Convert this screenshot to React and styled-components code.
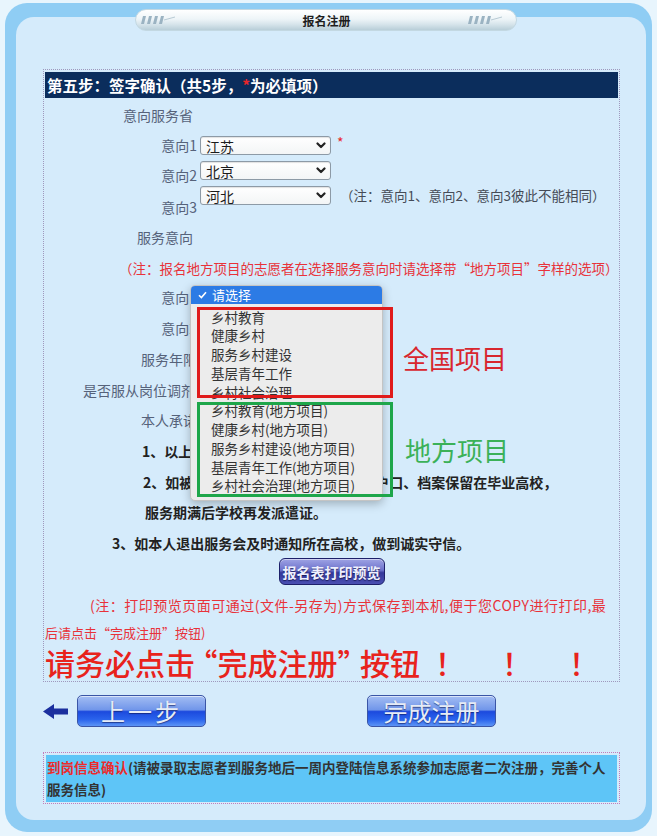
import React from "react";
import styled, { createGlobalStyle } from "styled-components";

const GlobalStyle = createGlobalStyle`
  html, body { margin: 0; padding: 0; }
  body {
    background: #e8f5fd;
    font-family: "Noto Sans CJK SC", "Noto Sans", sans-serif;
    text-spacing-trim: space-all;
  }
  #root { width: 657px; height: 836px; overflow: hidden; }
`;

const Frame = styled.div`
  box-sizing: border-box;
  width: 647px;
  height: 829px;
  margin: 3px 0 0 5px;
  background: #8fcdf4;
  border-radius: 22px;
  padding: 14px 6px 12px 11px;
`;

const Panel = styled.div`
  height: 803px;
  background: #d5ebfb;
  border-radius: 18px;
  display: flex;
  flex-direction: column;
`;

const Tab = styled.div`
  box-sizing: border-box;
  margin: -8px 0 0 119px;
  width: 382px;
  height: 22px;
  border-radius: 11px;
  border: 1px solid #c3d8e2;
  background: linear-gradient(#ffffff 0%, #eef5f8 45%, #d3e2e9 75%, #b8ced8 100%);
  display: flex;
  align-items: center;
  justify-content: space-between;
  padding: 0 12px 0 5px;
`;

const TabTitle = styled.span`
  font-size: 12px;
  font-weight: 700;
  color: #1e1e1e;
  margin-left: 8px;
`;

const Deco = () => (
  <svg width="36" height="10" viewBox="0 0 36 10">
    {[0, 6, 12, 18].map((x) => (
      <polygon key={x} points={`${x + 2},1 ${x + 5},1 ${x + 3},9 ${x},9`} fill="#9bb3c2" />
    ))}
    <line x1="23" y1="5" x2="34" y2="2" stroke="#b8cad4" strokeWidth="1" />
  </svg>
);

const FormBox = styled.div`
  box-sizing: border-box;
  margin: 38px 0 0 27px;
  width: 577px;
  height: 613px;
  border: 1px dotted #9f98bd;
  padding: 2px 1px;
`;

const StepBar = styled.div`
  height: 26px;
  background: #0b2d5c;
  color: #fff;
  font-size: 15.5px;
  font-weight: 700;
  line-height: 26px;
  padding-left: 2px;
  white-space: nowrap;
`;

const Star = styled.span`
  color: #e8262a;
`;

const Row = styled.div`
  position: relative;
  display: flex;
  align-items: ${(p) => (p.$top ? "flex-start" : "center")};
  height: ${(p) => p.$h}px;
  margin-top: ${(p) => p.$mt || 0}px;
  padding-left: ${(p) => p.$pl || 0}px;
  justify-content: ${(p) => (p.$center ? "center" : "flex-start")};
  white-space: nowrap;
`;

const Label = styled.div`
  flex-shrink: 0;
  box-sizing: border-box;
  width: 152px;
  text-align: right;
  padding-right: ${(p) => p.$pr || 0}px;
  margin-top: ${(p) => p.$off || 0}px;
  line-height: 19px;
  font-size: 14px;
  color: #56627a;
`;

const SelectBox = styled.div`
  box-sizing: border-box;
  flex-shrink: 0;
  width: 131px;
  height: 19px;
  margin-left: 3px;
  border: 1px solid #8d9aa6;
  border-radius: 3px;
  background: linear-gradient(#ffffff, #f3f5f6);
  box-shadow: inset 0 1px 1px rgba(0, 0, 0, 0.12);
  display: flex;
  align-items: center;
  justify-content: space-between;
  padding: 0 4px 0 5px;
  font-size: 14px;
  color: #1c1c1c;
`;

const Chevron = () => (
  <svg width="10" height="7" viewBox="0 0 10 7">
    <polyline points="1.5,1.5 5,5 8.5,1.5" fill="none" stroke="#222" strokeWidth="2.2" strokeLinecap="round" strokeLinejoin="round" />
  </svg>
);

const Select = ({ value }) => (
  <SelectBox>
    <span>{value}</span>
    <Chevron />
  </SelectBox>
);

const ReqMark = styled.span`
  color: #e8262a;
  font-size: 14px;
  margin: -4px 0 0 6px;
`;

const Hint = styled.span`
  font-size: ${(p) => p.$fs || 13}px;
  letter-spacing: ${(p) => p.$ls || 0}px;
  color: ${(p) => (p.$red ? "#e8323a" : "#454b57")};
  margin-left: ${(p) => p.$ml || 0}px;
  line-height: 19px;
`;

const Pledge = styled.div`
  font-size: 14px;
  font-weight: 700;
  color: #222;
`;

const PrintButton = styled.button`
  box-sizing: border-box;
  width: 106px;
  height: 27px;
  border: 1px solid #1d206a;
  border-radius: 6px;
  background: linear-gradient(#9ea3e4 0%, #6d72cc 45%, #34379a 55%, #4a4fb2 100%);
  color: #eef0ff;
  font-family: inherit;
  font-size: 14px;
  font-weight: 700;
  text-shadow: 0 1px 1px rgba(0, 0, 40, 0.6);
  padding: 0;
  box-shadow: inset 0 1px 0 rgba(255, 255, 255, 0.5);
`;

const BigWarn = styled.div`
  font-size: 30px;
  font-weight: 500;
  color: #e8231c;
  line-height: 32px;
`;

const OpenQuote = styled.span`
  margin-left: -0.25em;
`;

const CloseQuote = styled.span`
  margin-right: -0.25em;
`;

const Bang = styled.span`
  display: inline-block;
  margin-left: ${(p) => p.$ml}px;
`;

const Menu = styled.div`
  position: absolute;
  left: 145px;
  top: 3px;
  width: 193px;
  box-sizing: border-box;
  background: #ececec;
  border: 1px solid #c4c4c4;
  border-radius: 5px;
  box-shadow: 0 3px 10px rgba(0, 0, 0, 0.25);
  padding-bottom: 5px;
  z-index: 5;
  overflow: hidden;
`;

const MenuHead = styled.div`
  height: 18px;
  line-height: 18px;
  background: #2c7be5;
  color: #fff;
  font-size: 13px;
  padding-left: 7px;
  display: flex;
  align-items: center;
  gap: 5px;
`;

const MenuList = styled.div`
  padding-top: 3.5px;
`;

const MenuItem = styled.div`
  line-height: 18.75px;
  height: 18.75px;
  font-size: 13.5px;
  color: #333;
  padding-left: 20px;
`;

const Mark = styled.div`
  position: absolute;
  box-sizing: border-box;
  left: 152px;
  top: ${(p) => p.$top}px;
  width: 196px;
  height: ${(p) => p.$h}px;
  border: 3px solid ${(p) => p.$color};
  z-index: 6;
`;

const MarkText = styled.div`
  position: absolute;
  left: ${(p) => p.$left}px;
  top: ${(p) => p.$top}px;
  font-size: 26px;
  line-height: 32px;
  color: ${(p) => p.$color};
  z-index: 6;
`;

const Nav = styled.div`
  display: flex;
  align-items: center;
  height: 32px;
  margin-top: 13px;
  padding-left: 27px;
`;

const GlossButton = styled.button`
  box-sizing: border-box;
  width: 129px;
  height: 32px;
  margin-left: ${(p) => p.$ml}px;
  border: 1px solid #3a55a6;
  border-radius: 5px;
  background: linear-gradient(#a3bdf3 0%, #7196ea 46%, #1c4ade 52%, #2a63ec 78%, #5d95f5 100%);
  box-shadow: inset 0 1px 0 rgba(255, 255, 255, 0.6);
  color: #e6ecf6;
  font-family: inherit;
  font-size: 24px;
  letter-spacing: ${(p) => p.$ls || 0}px;
  text-shadow: 0 1px 1px rgba(10, 20, 80, 0.6);
  padding: 0;
  line-height: 30px;
`;

const Arrow = () => (
  <svg width="25" height="15" viewBox="0 0 25 15">
    <polygon points="0,7.5 11,0 11,4.5 25,4.5 25,10.5 11,10.5 11,15" fill="#1b2f9e" />
  </svg>
);

const InfoBox = styled.div`
  box-sizing: border-box;
  margin: 25px 0 0 27px;
  width: 577px;
  height: 52px;
  border: 1px dotted #c27cb9;
  padding: 2px;
`;

const InfoFill = styled.div`
  height: 100%;
  background: #5ec5f7;
  font-size: 13.5px;
  font-weight: 700;
  color: #333;
  line-height: 22px;
  padding: 1px 0 0 1px;
  white-space: nowrap;
`;

const Red = styled.span`
  color: #ec2b2b;
`;

const nationItems = ["乡村教育", "健康乡村", "服务乡村建设", "基层青年工作", "乡村社会治理"];

export default function App() {
  return (
    <>
      <GlobalStyle />
      <Frame>
        <Panel>
          <Tab>
            <Deco />
            <TabTitle>报名注册</TabTitle>
            <Deco />
          </Tab>
          <FormBox>
            <StepBar>
              第五步：签字确认（共5步，<Star>*</Star>为必填项）
            </StepBar>
            <Row $h={34}>
              <Label $pr={4}>意向服务省</Label>
            </Row>
            <Row $h={25} $mt={4} $top>
              <Label>意向1</Label>
              <Select value="江苏" />
              <ReqMark>*</ReqMark>
            </Row>
            <Row $h={25} $top>
              <Label $off={5}>意向2</Label>
              <Select value="北京" />
            </Row>
            <Row $h={34} $top>
              <Label $off={12}>意向3</Label>
              <Select value="河北" />
              <Hint $ml={9} $fs={13.5}>（注：意向1、意向2、意向3彼此不能相同）</Hint>
            </Row>
            <Row $h={34}>
              <Label $pr={4}>服务意向</Label>
            </Row>
            <Row $h={28} $pl={74}>
              <Hint $red $fs={13.5}>（注：报名地方项目的志愿者在选择服务意向时请选择带“地方项目”字样的选项）</Hint>
            </Row>
            <Row $h={30}>
              <Label>意向1</Label>
              <Select value="请选择" />
              <Menu>
                <MenuHead>
                  <svg width="9" height="8" viewBox="0 0 9 8">
                    <polyline points="1,4.2 3.4,6.6 8,1.2" fill="none" stroke="#fff" strokeWidth="1.6" />
                  </svg>
                  请选择
                </MenuHead>
                <MenuList>
                  {nationItems.map((t) => (
                    <MenuItem key={t}>{t}</MenuItem>
                  ))}
                  {nationItems.map((t) => (
                    <MenuItem key={t + "d"}>{t}(地方项目)</MenuItem>
                  ))}
                </MenuList>
              </Menu>
              <Mark $top={25} $h={91} $color="#e01b1b" />
              <Mark $top={120} $h={95} $color="#1ea64a" />
              <MarkText $left={358} $top={60} $color="#d8262e">全国项目</MarkText>
              <MarkText $left={360} $top={152} $color="#3bb158">地方项目</MarkText>
            </Row>
            <Row $h={32}>
              <Label>意向2</Label>
              <Select value="请选择" />
            </Row>
            <Row $h={31}>
              <Label>服务年限</Label>
              <Select value="2年" />
            </Row>
            <Row $h={30}>
              <Label $pr={2}>是否服从岗位调剂</Label>
              <Select value="是" />
            </Row>
            <Row $h={30}>
              <Label>本人承诺</Label>
            </Row>
            <Row $h={32} $pl={97}>
              <Pledge>1、以上所填信息真实有效。</Pledge>
            </Row>
            <Row $h={30} $pl={98}>
              <Pledge>2、如被录取，本人同意在服务期间将户口、档案保留在毕业高校，</Pledge>
            </Row>
            <Row $h={30} $pl={100}>
              <Pledge>服务期满后学校再发派遣证。</Pledge>
            </Row>
            <Row $h={31} $pl={67}>
              <Pledge>3、如本人退出服务会及时通知所在高校，做到诚实守信。</Pledge>
            </Row>
            <Row $h={27} $center>
              <PrintButton>报名表打印预览</PrintButton>
            </Row>
            <Row $h={26} $mt={7} $pl={45}>
              <Hint $red $fs={14} $ls={0.5}>(注：打印预览页面可通过(文件-另存为)方式保存到本机,便于您COPY进行打印,最</Hint>
            </Row>
            <Row $h={28}>
              <Hint $red>后请点击“完成注册”按钮)</Hint>
            </Row>
            <Row $h={32}>
              <BigWarn>
                请务必点击<OpenQuote>“</OpenQuote>完成注册<CloseQuote>”</CloseQuote>按钮
                <Bang $ml={15}>！</Bang>
                <Bang $ml={37}>！</Bang>
                <Bang $ml={37}>！</Bang>
              </BigWarn>
            </Row>
          </FormBox>
          <Nav>
            <Arrow />
            <GlossButton $ml={9} $ls={3}>上一步</GlossButton>
            <GlossButton $ml={161}>完成注册</GlossButton>
          </Nav>
          <InfoBox>
            <InfoFill>
              <Red>到岗信息确认</Red>(请被录取志愿者到服务地后一周内登陆信息系统参加志愿者二次注册，完善个人
              <br />
              服务信息)
            </InfoFill>
          </InfoBox>
        </Panel>
      </Frame>
    </>
  );
}
